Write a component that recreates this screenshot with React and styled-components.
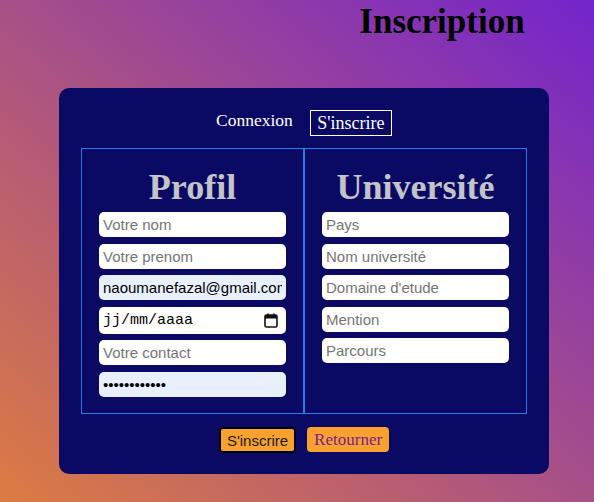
import styled, { createGlobalStyle } from 'styled-components';

const GlobalStyle = createGlobalStyle`
  html, body {
    margin: 0;
    padding: 0;
  }
  body {
    min-height: 502px;
    background: linear-gradient(to top right, #dc7c42, #7324cc);
    font-family: "Liberation Serif", serif;
    overflow: hidden;
  }
`;

export default function App() {
  return (
    <Page>
      <GlobalStyle />
      <Title>Inscription</Title>
      <Card>
        <Tabs>
          <TabLink>Connexion</TabLink>
          <TabButton>S'inscrire</TabButton>
        </Tabs>
        <Panels>
          <Panel>
            <PanelTitle>Profil</PanelTitle>
            <Field placeholder="Votre nom" />
            <Field placeholder="Votre prenom" />
            <Field $filled defaultValue="naoumanefazal@gmail.com" />
            <DateWrap>
              <DateField defaultValue="jj/mm/aaaa" />
              <CalendarIcon />
            </DateWrap>
            <Field placeholder="Votre contact" />
            <Field $filled type="password" defaultValue="motdepasse12" />
          </Panel>
          <Panel>
            <PanelTitle>Université</PanelTitle>
            <Field placeholder="Pays" />
            <Field placeholder="Nom université" />
            <Field placeholder="Domaine d'etude" />
            <Field placeholder="Mention" />
            <Field placeholder="Parcours" />
          </Panel>
        </Panels>
        <Actions>
          <SubmitButton>S'inscrire</SubmitButton>
          <BackButton>Retourner</BackButton>
        </Actions>
      </Card>
    </Page>
  );
}

function CalendarIcon() {
  return (
    <IconBox>
      <svg width="14" height="15" viewBox="0 0 14 15" fill="none">
        <rect x="1" y="2" width="12" height="12" rx="1.5" stroke="#111" strokeWidth="1.6" />
        <rect x="1" y="2" width="12" height="3.5" fill="#111" />
        <line x1="4" y1="0.5" x2="4" y2="3" stroke="#111" strokeWidth="1.6" />
        <line x1="10" y1="0.5" x2="10" y2="3" stroke="#111" strokeWidth="1.6" />
      </svg>
    </IconBox>
  );
}

const Page = styled.div`
  width: 594px;
  height: 502px;
`;

const Title = styled.h1`
  margin: 0;
  padding: 4px 0 0 290px;
  text-align: center;
  font-family: "Liberation Serif", serif;
  font-size: 35px;
  line-height: 35px;
  font-weight: bold;
  color: #000;
`;

const Card = styled.div`
  margin: 49px 0 0 59px;
  width: 490px;
  box-sizing: border-box;
  padding: 22px 22px 21px;
  background: #0a0a64;
  border-radius: 10px;
`;

const Tabs = styled.div`
  display: flex;
  justify-content: center;
  align-items: flex-start;
  gap: 17px;
`;

const TabLink = styled.span`
  color: #fff;
  font-size: 17.5px;
  line-height: 20px;
  cursor: pointer;
`;

const TabButton = styled.button`
  background: transparent;
  border: 1px solid #fff;
  color: #fff;
  font-family: "Liberation Serif", serif;
  font-size: 18px;
  line-height: 18px;
  padding: 3px 6.5px;
`;

const Panels = styled.div`
  display: grid;
  grid-template-columns: 1fr 1fr;
  margin-top: 12px;
`;

const Panel = styled.div`
  display: flex;
  flex-direction: column;
  align-items: center;
  gap: 6.5px;
  height: 266px;
  box-sizing: border-box;
  border: 1px solid #1f7ce8;
  padding: 18px 17px 0;
`;

const PanelTitle = styled.h2`
  margin: 0 0 -2.5px;
  font-family: "Liberation Serif", serif;
  font-size: 36px;
  line-height: 41px;
  font-weight: bold;
  color: #c4c4c8;
`;

const Field = styled.input`
  width: 187px;
  height: 25px;
  box-sizing: border-box;
  border: none;
  border-radius: 5px;
  padding: 0 4px;
  font-family: "Liberation Sans", Arial, sans-serif;
  font-size: 15px;
  color: #000;
  background: ${(p) => (p.$filled ? '#e8f0fe' : '#fff')};
  outline: none;

  &::placeholder {
    color: #757575;
  }
`;

const DateWrap = styled.div`
  position: relative;
  width: 187px;
  height: 27px;
`;

const DateField = styled(Field)`
  height: 27px;
  font-family: "Liberation Mono", "DejaVu Sans Mono", monospace;
  font-size: 15px;
`;

const IconBox = styled.span`
  position: absolute;
  right: 8px;
  top: 6px;
  display: flex;
`;

const Actions = styled.div`
  display: flex;
  justify-content: center;
  align-items: flex-start;
  gap: 11px;
  margin-top: 13px;
`;

const SubmitButton = styled.button`
  background: #f9a12e;
  border: 2px solid #000;
  border-radius: 4px;
  height: 26px;
  padding: 0 6px;
  font-family: "Liberation Sans", Arial, sans-serif;
  font-size: 15px;
  color: #1a1a1a;
`;

const BackButton = styled.button`
  background: #f9a12e;
  border: none;
  border-radius: 4px;
  height: 25px;
  padding: 0 7px;
  font-family: "Liberation Serif", serif;
  font-size: 17px;
  color: #7a2290;
`;
